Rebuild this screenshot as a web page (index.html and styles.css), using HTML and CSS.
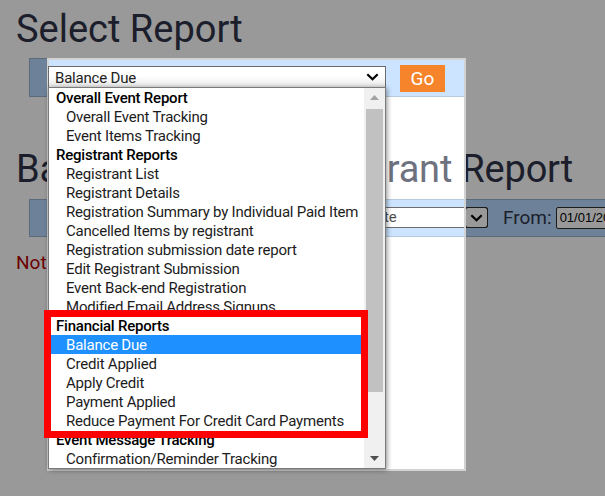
FILE: index.html
```html
<!DOCTYPE html>
<html lang="en">
<head>
<meta charset="utf-8">
<title>Select Report</title>
<link rel="stylesheet" href="styles.css">
</head>
<body>
<main class="page">
  <h1 class="title">Select Report</h1>
  <form class="bar bar-select">
    <div class="picker">
      <div class="select-box">
        <span class="select-value">Balance Due</span>
        <svg class="chevron" width="13" height="8" viewBox="0 0 13 8"><polyline points="1.3,1.3 6.5,6.3 11.7,1.3" fill="none" stroke="#000" stroke-width="2.2"/></svg>
      </div>
      <div class="listbox">
        <ul class="options">
          <li class="group">Overall Event Report</li>
          <li class="opt">Overall Event Tracking</li>
          <li class="opt">Event Items Tracking</li>
          <li class="group">Registrant Reports</li>
          <li class="opt">Registrant List</li>
          <li class="opt">Registrant Details</li>
          <li class="opt">Registration Summary by Individual Paid Item</li>
          <li class="opt">Cancelled Items by registrant</li>
          <li class="opt">Registration submission date report</li>
          <li class="opt">Edit Registrant Submission</li>
          <li class="opt">Event Back-end Registration</li>
          <li class="opt">Modified Email Address Signups</li>
          <li class="group">Financial Reports</li>
          <li class="opt selected">Balance Due</li>
          <li class="opt">Credit Applied</li>
          <li class="opt">Apply Credit</li>
          <li class="opt">Payment Applied</li>
          <li class="opt">Reduce Payment For Credit Card Payments</li>
          <li class="group">Event Message Tracking</li>
          <li class="opt">Confirmation/Reminder Tracking</li>
        </ul>
        <div class="scrollbar">
          <div class="sb-btn"><svg width="9" height="5" viewBox="0 0 9 5"><polygon points="0,5 4.5,0 9,5" fill="#a3a3a3"/></svg></div>
          <div class="sb-track"><div class="sb-thumb"></div></div>
          <div class="sb-btn"><svg width="9" height="5" viewBox="0 0 9 5"><polygon points="0,0 9,0 4.5,5" fill="#505050"/></svg></div>
        </div>
        <div class="callout"></div>
      </div>
    </div>
    <button class="go" type="button">Go</button>
  </form>
  <h1 class="title title-report">Balance Due by Registrant Report</h1>
  <div class="bar bar-filter">
    <div class="filter-select">
      <span class="filter-value">Registration Date</span>
      <span class="filter-arrow"><svg width="13" height="8" viewBox="0 0 13 8"><polyline points="1.3,1.3 6.5,6.3 11.7,1.3" fill="none" stroke="#000" stroke-width="2.2"/></svg></span>
    </div>
    <span class="from">From:</span>
    <div class="date-input">01/01/2024</div>
  </div>
  <p class="notice">Not Found</p>
</main>
<div class="spotlight"></div>
</body>
</html>
```
FILE: styles.css
```css
* { box-sizing: border-box; }
html, body { margin: 0; padding: 0; }
body {
  width: 605px;
  height: 496px;
  overflow: hidden;
  position: relative;
  background: #fff;
  font-family: Roboto, "Noto Sans", sans-serif;
}
.page { padding: 7px 0 0 16px; }
.title {
  margin: 0;
  font-size: 38px;
  font-weight: 400;
  line-height: 44px;
  color: #303548;
  white-space: nowrap;
}
.title-report { margin-top: 50px; letter-spacing: -0.2px; }

.bar {
  margin-left: 13px;
  background: #b6d9ff;
  border: 1px solid #98b3cf;
  display: flex;
  align-items: flex-start;
}
.bar-select {
  margin-top: 7px;
  width: 436px;
  height: 39px;
  padding: 7px 0 0 18px;
}
.picker { position: relative; z-index: 2; }
.select-box {
  width: 338px;
  height: 22px;
  border: 1px solid #6b6b6b;
  background: linear-gradient(#fff 45%, #e9e9e9);
  display: flex;
  align-items: center;
  padding: 2px 6px 0 6px;
}
.select-value {
  flex: 1;
  font-size: 15px;
  letter-spacing: -0.2px;
  color: #222;
  line-height: 19px;
}
.chevron { display: block; margin-top: -2px; }

.listbox {
  position: absolute;
  left: 0;
  top: 21px;
  width: 338px;
  height: 382px;
  background: #fff;
  border: 1px solid #7a7a7a;
  box-shadow: 1px 1px 5px rgba(0, 0, 0, 0.45);
  display: grid;
  grid-template-columns: 1fr 21px;
}
.options {
  list-style: none;
  margin: 0;
  padding: 0;
  overflow: hidden;
}
.options li {
  height: 19px;
  padding-top: 1px;
  line-height: 19px;
  font-size: 15px;
  letter-spacing: -0.22px;
  white-space: nowrap;
}
.group { padding-left: 7px; font-weight: 500; color: #000; }
.opt { padding-left: 17px; color: #1c1c1c; }
.selected { background: #1e90ff; color: #fff; }

.scrollbar {
  background: #f0f0f0;
  display: flex;
  flex-direction: column;
}
.sb-btn {
  height: 19px;
  display: flex;
  align-items: center;
  justify-content: center;
}
.sb-track { flex: 1; padding: 2px 2px 0 2px; }
.sb-thumb { height: 283px; background: #c1c1c1; }

.callout {
  position: absolute;
  left: -5px;
  top: 222px;
  width: 324px;
  height: 128px;
  border: 7px solid #ff0000;
}

.go {
  position: relative;
  z-index: 2;
  margin: -1px 0 0 14px;
  width: 45px;
  height: 27px;
  border: 0;
  padding: 0;
  background: #f5842a;
  color: #fff;
  font-family: Roboto, "Noto Sans", sans-serif;
  font-size: 19px;
  line-height: 27px;
}

.bar-filter {
  margin-top: 8px;
  height: 38px;
  padding: 7px 0 0 250px;
  border-right: 0;
}
.filter-select {
  flex: none;
  width: 208px;
  height: 21px;
  border: 1px solid #2e2e2e;
  border-radius: 2px;
  background: #fff;
  display: flex;
}
.filter-value {
  flex: 1;
  padding-left: 4px;
  font-size: 15px;
  letter-spacing: -0.2px;
  line-height: 19px;
  color: #000;
  white-space: nowrap;
  overflow: hidden;
}
.filter-arrow {
  width: 23px;
  margin: -1px -1px -1px 0;
  border: 1px solid #2e2e2e;
  border-radius: 3px;
  display: flex;
  align-items: center;
  justify-content: center;
}
.from {
  flex: none;
  margin-left: 15px;
  font-size: 19px;
  line-height: 22px;
  color: #303548;
}
.date-input {
  flex: none;
  margin-left: 4px;
  width: 80px;
  height: 22px;
  border: 1px solid #2e2e2e;
  border-radius: 2px;
  background: #fff;
  font-family: "Liberation Sans", Arial, sans-serif;
  font-size: 13px;
  line-height: 20px;
  padding-left: 3px;
  color: #000;
  white-space: nowrap;
  overflow: hidden;
}
.notice {
  margin: 15px 0 0;
  font-size: 19px;
  line-height: 22px;
  color: #b30000;
}

.spotlight {
  position: absolute;
  z-index: 1;
  left: 47px;
  top: 58px;
  width: 419px;
  height: 413px;
  border: 2px solid #d2d2d2;
  background: rgba(255, 255, 255, 0.3);
  box-shadow: 0 0 0 1200px rgba(0, 0, 0, 0.4);
}
```
